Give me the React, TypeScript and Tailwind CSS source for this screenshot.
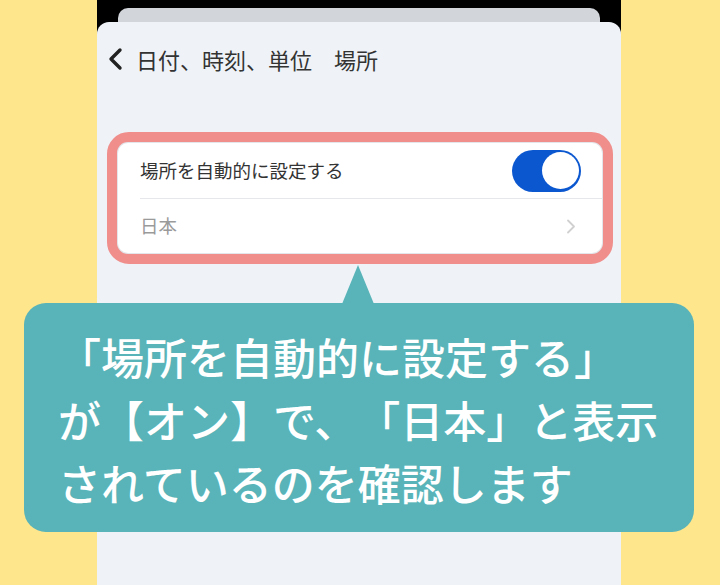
export default function App() {
  return (
    <div className="relative w-[720px] h-[585px] overflow-hidden bg-[#fee68d] font-['Noto_Sans_CJK_JP',sans-serif] [text-spacing-trim:space-all]">
      {/* phone column */}
      <div className="ml-[97px] w-[524px] h-full flex flex-col bg-black">
        <div className="mt-[8px] mx-[21px] h-[14px] rounded-t-[10px] bg-[#d2d5da]" />
        <div className="flex-1 flex flex-col rounded-t-[12px] bg-[#eff3f8]">
          <div className="flex items-center h-[24px] mt-[25px] pl-[10px] gap-[13px]">
            <svg width="16" height="24" viewBox="0 0 16 24" fill="none">
              <path d="M13 3L4 12l9 9" stroke="#222" strokeWidth="3.4" strokeLinecap="round" strokeLinejoin="round" />
            </svg>
            <span className="text-[22px] leading-none text-[#333] whitespace-nowrap">日付、時刻、単位　場所</span>
          </div>

          <div className="mt-[61px] ml-[10px] mr-[8px] rounded-[22px] border-[11px] border-[#ef8e8b]">
            <div className="rounded-[10px] bg-white shadow-[0_0_0_1px_#e3e6ea]">
              <div className="flex items-center justify-between h-[55px] pl-[22px] pr-[21px]">
                <span className="text-[18.5px] text-[#333] whitespace-nowrap">場所を自動的に設定する</span>
                <div className="flex items-center justify-end w-[69px] h-[42px] rounded-full bg-[#0b57d0] pr-[2px]">
                  <div className="w-[37px] h-[37px] rounded-full bg-white" />
                </div>
              </div>
              <div className="ml-[22px] h-px bg-[#e5e7eb]" />
              <div className="flex items-center justify-between h-[54px] pl-[22px] pr-[26px]">
                <span className="text-[18.5px] text-[#9a9a9a]">日本</span>
                <svg width="10" height="15" viewBox="0 0 10 15" fill="none">
                  <path d="M2 1.5l6 6-6 6" stroke="#d0d0d0" strokeWidth="1.8" strokeLinecap="round" strokeLinejoin="round" />
                </svg>
              </div>
            </div>
          </div>
        </div>
      </div>

      {/* callout */}
      <div className="absolute left-[24px] top-[303px] w-[670px] h-[229px] rounded-[22px] bg-[#58b4b8] pl-[34px] pt-[22px] text-white text-[43px] leading-[63px] font-medium whitespace-nowrap">
        <svg className="absolute left-[318px] top-[-38px]" width="32" height="39" viewBox="0 0 32 39">
          <path d="M16 0L32 39H0z" fill="#58b4b8" />
        </svg>
        <div>「場所を自動的に設定する」</div>
        <div>が【オン】で、「日本」と表示</div>
        <div>されているのを確認します</div>
      </div>
    </div>
  );
}
